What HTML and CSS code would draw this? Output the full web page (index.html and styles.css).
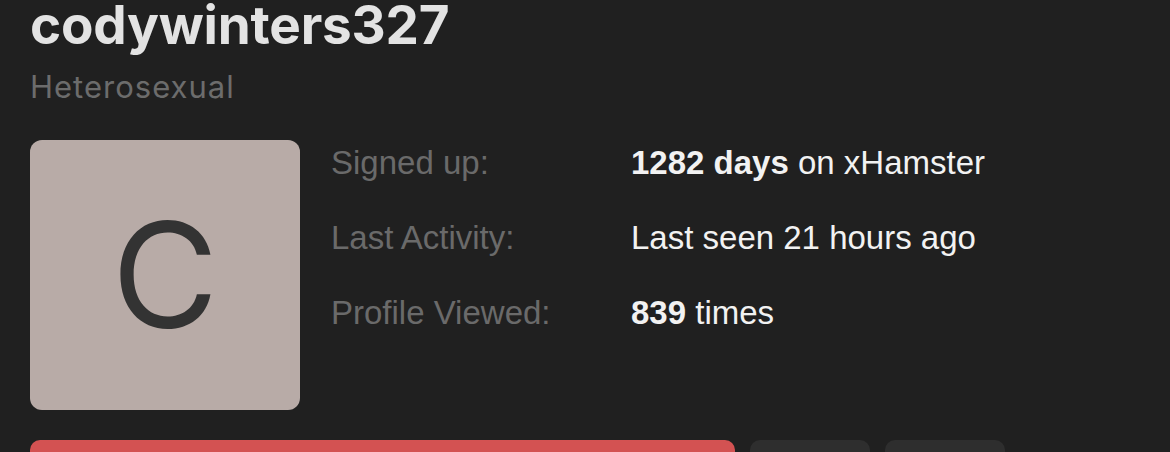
FILE: index.html
```html
<!DOCTYPE html>
<html lang="en">
<head>
  <meta charset="UTF-8" />
  <meta name="viewport" content="width=device-width, initial-scale=1.0"/>
  <title>codywinters327</title>
  <link rel="stylesheet" href="styles.css">
</head>
<body>
  <div class="profile">
    <h1 class="username">codywinters327</h1>
    <div class="orientation">Heterosexual</div>

    <div class="info">
      <div class="avatar">C</div>
      <div class="stats">
        <div class="row">
          <span class="label">Signed up:</span>
          <span class="value"><b>1282 days</b> on xHamster</span>
        </div>
        <div class="row">
          <span class="label">Last Activity:</span>
          <span class="value">Last seen 21 hours ago</span>
        </div>
        <div class="row">
          <span class="label">Profile Viewed:</span>
          <span class="value"><b>839</b> times</span>
        </div>
      </div>
    </div>

    <div class="actions">
      <button class="btn-main"></button>
      <button class="btn-small"></button>
      <button class="btn-small"></button>
    </div>
  </div>
</body>
</html>
```

FILE: styles.css
```css
body {
  margin: 0;
  background: #202020;
  overflow: hidden;
}
.profile {
  padding-left: 30px;
  font-family: Inter, "Noto Sans", sans-serif;
}
.username {
  margin: -7px 0 0 0;
  font-size: 53px;
  font-weight: 700;
  color: #e3e3e3;
  letter-spacing: -0.2px;
}
.orientation {
  margin-top: 11px;
  font-size: 31px;
  color: #6c6c6c;
  letter-spacing: 1px;
}
.info {
  display: flex;
  gap: 31px;
  margin-top: 35px;
}
.avatar {
  width: 270px;
  height: 270px;
  border-radius: 12px;
  background: #b8aba7;
  color: #333333;
  font-size: 146px;
  display: flex;
  align-items: center;
  justify-content: center;
}
.stats {
  display: flex;
  flex-direction: column;
  gap: 35px;
  padding-top: 3px;
  font-family: "Liberation Sans", Arial, sans-serif;
  font-size: 33px;
}
.row {
  display: flex;
  line-height: 40px;
}
.label {
  width: 300px;
  color: #6a6a6a;
}
.value {
  color: #f2f2f2;
}
.actions {
  display: flex;
  gap: 15px;
  margin-top: 30px;
}
.actions button {
  border: none;
  height: 60px;
  border-radius: 10px;
}
.btn-main {
  width: 705px;
  background: #d35252;
}
.btn-small {
  width: 120px;
  background: #2e2e2e;
}
```
